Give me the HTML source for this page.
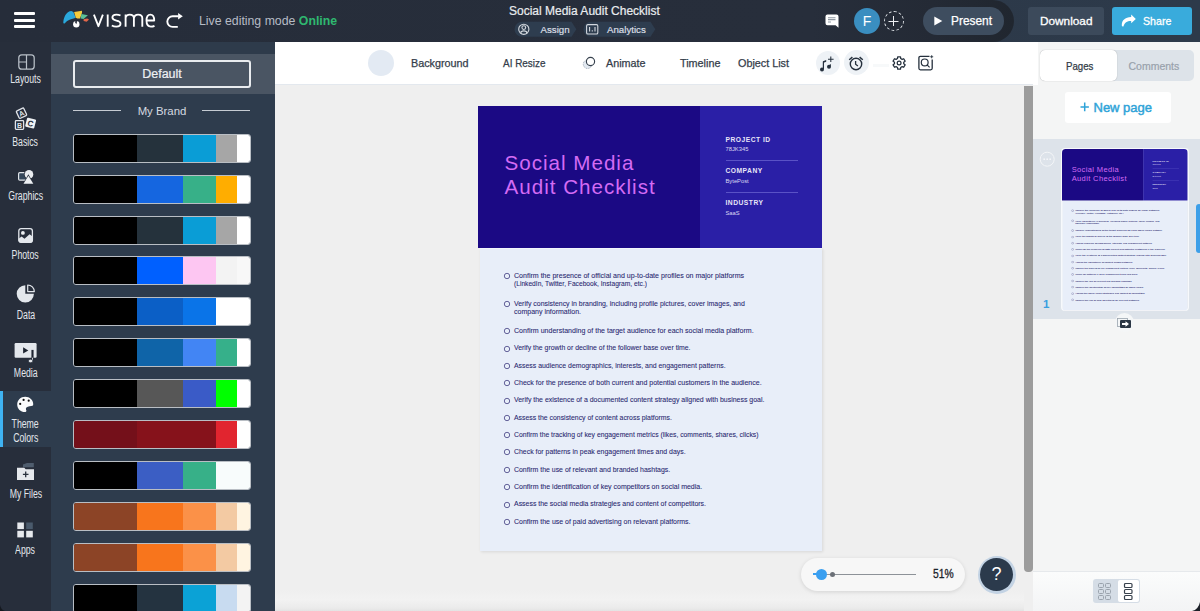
<!DOCTYPE html>
<html><head><meta charset="utf-8">
<style>
*{box-sizing:border-box;margin:0;padding:0}
html,body{width:1200px;height:611px;overflow:hidden;background:#efefef;font-family:"Liberation Sans",sans-serif}
.a{position:absolute}
.t{position:absolute;white-space:nowrap;line-height:1}
#hdr{left:0;top:0;width:1200px;height:42px;background:linear-gradient(90deg,#2a3545 0%,#2d3a4a 100%)}
#side{left:0;top:42px;width:51px;height:569px;background:#272e3b}
#panel{left:51px;top:42px;width:224px;height:569px;background:#2e3c4d}
#tool{left:275px;top:42px;width:758px;height:43px;background:#fff;border-bottom:1px solid #e3e8ee}
#rp{left:1033px;top:42px;width:167px;height:569px;background:#f4f5f5}
.pal{position:absolute;left:73px;width:178px;height:29px;border:1px solid #b9bec4;border-radius:3px;overflow:hidden;display:flex}
.pal i{display:block;height:100%}
.sl{position:absolute;left:0;width:51px;text-align:center;color:#e3e7ec;font-size:12.3px;line-height:1}
.tb{font-size:10.8px;color:#343d4a;-webkit-text-stroke:0.25px #343d4a}
.sl span{display:inline-block;transform:scaleX(.71);transform-origin:center}
.page{position:absolute;width:344px;height:445px}
.pg-body{position:absolute;left:2px;top:142px;width:342px;height:303px;background:#e8eef9;border-top:1px solid #f3f6fb;box-shadow:1px 1px 3px rgba(0,0,0,.10)}
.pg-hd{position:absolute;left:0;top:0;width:222px;height:142px;background:#1b0984}
.pg-rc{position:absolute;left:222px;top:0;width:122px;height:142px;background:#2a1fa6}
.pg-title{font-size:20.6px;color:#d46bf4;letter-spacing:1px}
.pg-lab{font-size:6.7px;font-weight:700;color:#e8e6f7;letter-spacing:0.5px}
.pg-val{font-size:5.8px;color:#dcd9f2}
.pg-ck{position:absolute}
.pg-it{font-size:7px;color:#2a2870;-webkit-text-stroke:0.08px #2a2870;transform-origin:0 0}
</style></head><body>
<!-- header -->
<div id="hdr" class="a">
  <div class="a" style="left:0;top:0;width:1014px;height:42px;background:linear-gradient(90deg,#262d3a 0%,#272e3b 80%,#242a35 92%,#20262f 100%);border-radius:0 21px 21px 0"></div>
  <div class="a" style="left:14px;top:12px;width:21px;height:3px;background:#fff;border-radius:1px"></div>
  <div class="a" style="left:14px;top:19px;width:21px;height:3px;background:#fff;border-radius:1px"></div>
  <div class="a" style="left:14px;top:25px;width:21px;height:3px;background:#fff;border-radius:1px"></div>
  <svg class="a" style="left:60px;top:6px" width="32" height="24" viewBox="0 0 32 24">
    <path d="M3.3 17.3 C3.3 13 5 8.5 7.9 6.3 C9 5.5 10.3 5.1 11.4 5.1 L13.4 5.9 L15.7 11.8 C14.3 12.3 13 12.7 11.8 13 C9.5 13.5 7.4 14.6 6 16 L4.7 17.4Z" fill="#2aa8dc"/>
    <path d="M14.1 5.9 L22 4.7 L22 6.7 L20 12.6 L17.3 12.6 L15.8 11.7Z" fill="#f3cb3c"/>
    <path d="M21.4 8 L27.9 9.2 L23.6 13 L20.6 12.6Z" fill="#5cbf96"/>
    <path d="M23.6 13.3 L27.1 12.6 L29 13.5 L26.7 15.7 L23.6 14.9Z" fill="#e2674a"/>
    <circle cx="16.3" cy="18.3" r="3.2" fill="#fff"/>
    <path d="M16.3 18.3 L14.6 15.6 A3.2 3.2 0 0 1 17.2 15.2Z" fill="#272e3b"/>
  </svg>
  <svg class="a" style="left:90px;top:10px" width="70" height="20" viewBox="90 10 70 20">
    <g fill="none" stroke="#fff" stroke-width="1.85" stroke-linecap="butt" stroke-linejoin="round">
    <path d="M93.9 14.6 L98.4 26.2 L102.9 14.6"/>
    <path d="M107.7 14.5 V26.7"/>
    <path d="M120.5 15.5 C119.4 14.9 118 14.6 116.4 14.6 C113.6 14.6 112.4 15.9 112.4 17.6 C112.4 19.5 114 20.1 116.4 20.6 C119 21.1 120.5 21.8 120.5 23.7 C120.5 25.6 119 26.6 116.3 26.6 C114.5 26.6 113 26.2 111.8 25.5"/>
    <path d="M125.6 26.7 V14.5 M125.6 17.6 C126.2 15.4 127.7 14.6 129.7 14.6 C132.3 14.6 133.9 15.7 133.9 18.3 V26.7 M133.9 18.3 C134.3 15.6 135.9 14.6 138.1 14.6 C140.7 14.6 142.3 15.8 142.3 18.3 V26.7"/>
    <path d="M146.6 20.5 H154.2 C154.2 16.6 152.7 14.6 150.4 14.6 C147.8 14.6 146.5 16.9 146.5 20.6 C146.5 24.5 148.1 26.6 150.9 26.6 C152.4 26.6 153.5 26.3 154.5 25.8"/>
    </g>
  </svg>
  <svg class="a" style="left:162px;top:8px" width="26" height="24" viewBox="0 0 26 24">
    <path d="M16.6 8.3 H10.6 A5.3 5.3 0 0 0 10.6 18.9 H15.8" fill="none" stroke="#fff" stroke-width="1.9"/>
    <path d="M16.1 5 L20.8 8.3 L16.1 11.4Z" fill="#fff"/>
  </svg>
  <div class="t" style="left:199px;top:15.3px;font-size:12.3px;color:#b6bcc5">Live editing mode <b style="color:#2fb870">Online</b></div>

  <div class="t" style="left:509px;top:5.2px;font-size:12px;color:#e9ecef;-webkit-text-stroke:0.2px #e9ecef">Social Media Audit Checklist</div>
  <svg class="a" style="left:514px;top:21px" width="145" height="17" viewBox="514 21 145 17">
    <path d="M522 21.8 H571.5 L576.3 29.3 L571.5 36.8 H522 A7.5 7.5 0 0 1 522 21.8Z" fill="#2e3d4f"/>
    <path d="M591 21.8 H650.5 L655.3 29.3 L650.5 36.8 H591 A7.5 7.5 0 0 1 591 21.8Z" fill="#2e3d4f"/>
    <g fill="none" stroke="#d3d8de" stroke-width="1.1">
    <circle cx="523.8" cy="29.3" r="5.1"/>
    <circle cx="523.8" cy="27.6" r="1.9"/>
    <path d="M521 33.8 V31.8 Q523.8 30 526.6 31.8 V33.8"/>
    <rect x="586.6" y="24.6" width="11.2" height="9.4" rx="1.3"/>
    <path d="M589.6 27 V31.6 M592.3 30.2 V31.6 M595 27 V31.6"/>
    </g>
  </svg>
  <div class="t" style="left:540.5px;top:24.6px;font-size:9.7px;color:#d9dee4;-webkit-text-stroke:0.2px #d9dee4">Assign</div>
  <div class="t" style="left:607px;top:24.6px;font-size:9.7px;color:#d9dee4;-webkit-text-stroke:0.2px #d9dee4">Analytics</div>

  <svg class="a" style="left:825px;top:14px" width="15" height="15" viewBox="0 0 15 15">
    <path d="M2.5 0.5 H11.5 Q13.5 0.5 13.5 2.5 V13.8 L10.6 11.2 H2.5 Q0.5 11.2 0.5 9.2 V2.5 Q0.5 0.5 2.5 0.5Z" fill="#fff"/>
    <path d="M3 3.8 H10.5 M3 5.6 H10.5" stroke="#8e97a1" stroke-width="1.1"/><path d="M3 8 H6" stroke="#8e97a1" stroke-width="1"/>
  </svg>
  <div class="a" style="left:854px;top:8px;width:26px;height:26px;border-radius:50%;background:#3a8ec0"></div>
  <div class="t" style="left:854px;top:14px;width:26px;text-align:center;font-size:14px;color:#fff">F</div>
  <div class="a" style="left:884px;top:11px;width:20px;height:20px;border-radius:50%;border:1.3px dashed #e3e7eb"></div>
  <svg class="a" style="left:884px;top:11px" width="20" height="20" viewBox="0 0 20 20"><path d="M9.5 5 V15 M4.5 10.5 H14.5" stroke="#eef0f3" stroke-width="1"/></svg>

  
  <div class="a" style="left:923px;top:7px;width:81px;height:28px;background:#3e4d5f;border-radius:14px"></div>
  <svg class="a" style="left:934px;top:16px" width="9" height="10" viewBox="0 0 9 10"><path d="M0.3 0.5 L8.3 5 L0.3 9.5Z" fill="#fff"/></svg>
  <div class="t" style="left:951px;top:16.2px;font-size:11.9px;color:#fff;-webkit-text-stroke:0.25px #fff">Present</div>

  <div class="a" style="left:1028px;top:7px;width:76px;height:28px;background:#3c4a5b;border-radius:3px"></div>
  <div class="t" style="left:1040px;top:15.5px;font-size:11.8px;color:#fff;-webkit-text-stroke:0.3px #fff">Download</div>
  <div class="a" style="left:1112px;top:7px;width:80px;height:28px;background:#39abdc;border-radius:3px"></div>
  <svg class="a" style="left:1121px;top:14px" width="16" height="14" viewBox="0 0 16 14">
    <path d="M0.8 11.6 C0.6 6.5 4 3.3 10.2 3.1 V0.6 L14.8 4.9 L10.2 9.3 V6.9 C6.2 6.8 3.6 8.4 2.4 12.6 C1.6 12.7 0.9 12.4 0.8 11.6Z" fill="#fff"/>
  </svg>
  <div class="t" style="left:1142.5px;top:15.5px;font-size:11.8px;color:#fff;-webkit-text-stroke:0.3px #fff;transform:scaleX(.9);transform-origin:0 0">Share</div>
</div>

<!-- left icon sidebar -->
<div id="side" class="a"></div>
<!-- sidebar items -->
<div class="a" style="left:0;top:391px;width:51px;height:56px;background:#2e3c4d"></div>
<div class="a" style="left:0;top:391px;width:3px;height:56px;background:#3fb3f2"></div>
<svg class="a" style="left:18px;top:54px" width="17" height="16" viewBox="0 0 17 16">
  <rect x="0.8" y="0.8" width="15.4" height="14.4" rx="3" fill="none" stroke="#b9c0c8" stroke-width="1.25"/>
  <path d="M8.5 1 V15 M1 8 H8.5" stroke="#b9c0c8" stroke-width="1.2"/>
</svg>
<div class="sl" style="top:73px"><span>Layouts</span></div>
<svg class="a" style="left:10px;top:103px" width="32" height="30" viewBox="0 0 32 30">
  <g transform="rotate(-25 11.5 10.2)"><rect x="7.4" y="6.1" width="8.2" height="8.2" rx="1" fill="none" stroke="#dfe3e8" stroke-width="1.3"/>
  <text x="11.5" y="12.9" font-size="7" font-family="Liberation Sans" font-weight="700" text-anchor="middle" fill="#dfe3e8">A</text></g>
  <rect x="5.4" y="17.7" width="8.2" height="8.6" rx="0.8" fill="none" stroke="#dfe3e8" stroke-width="1.3"/>
  <text x="9.5" y="24.6" font-size="7" font-family="Liberation Sans" font-weight="700" text-anchor="middle" fill="#dfe3e8">B</text>
  <g transform="rotate(14 20.6 20.1)"><rect x="16" y="15.5" width="9.3" height="9.3" rx="1" fill="#eef1f4"/>
  <text x="20.6" y="23.3" font-size="8" font-family="Liberation Sans" font-weight="700" text-anchor="middle" fill="#272e3b">C</text></g>
</svg>
<div class="sl" style="top:136px"><span>Basics</span></div>
<svg class="a" style="left:17px;top:169px" width="19" height="16" viewBox="0 0 19 16">
  <rect x="1.6" y="3.6" width="8" height="7.6" rx="1.2" fill="#34465a" stroke="#dfe3e8" stroke-width="1.2"/>
  <circle cx="12" cy="5.4" r="5" fill="#272e3b"/>
  <circle cx="12" cy="5.4" r="4.3" fill="#e9ecf0"/>
  <path d="M11.4 5.2 L17.3 15.6 H5.5Z" fill="#272e3b"/>
  <path d="M11.4 6.8 L16.3 14.7 H6.5Z" fill="#eef1f4"/>
</svg>
<div class="sl" style="top:190px"><span>Graphics</span></div>
<svg class="a" style="left:17px;top:227px" width="17" height="17" viewBox="0 0 17 17">
  <rect x="1.8" y="1.6" width="13.6" height="13.7" rx="2.3" fill="none" stroke="#e3e7ec" stroke-width="1.3"/>
  <path d="M1.5 11.8 L4.6 9.6 L7.5 11.8 L12.6 7.2 L15.6 9.4 V13.5 Q15.6 15.8 13.5 15.8 H3.8 Q1.5 15.8 1.5 13.5Z" fill="#e3e7ec"/>
  <circle cx="5.9" cy="5.9" r="1.9" fill="#eef1f4"/>
</svg>
<div class="sl" style="top:249px"><span>Photos</span></div>
<svg class="a" style="left:16px;top:283px" width="21" height="21" viewBox="0 0 21 21">
  <path d="M9.3 2.2 A8.6 8.6 0 1 0 17.9 10.8 H9.3Z" fill="#e3e7ec"/>
  <path d="M11.7 8.6 V2 A6.6 6.6 0 0 1 18.3 8.6Z" fill="none" stroke="#e3e7ec" stroke-width="1.2" stroke-linejoin="round"/>
</svg>
<div class="sl" style="top:309px"><span>Data</span></div>
<svg class="a" style="left:14px;top:342px" width="24" height="22" viewBox="0 0 24 22">
  <rect x="0.6" y="1" width="22" height="14.7" rx="1.2" fill="#e3e7ec"/>
  <path d="M9.1 5.2 L14.3 8.4 L9.1 11.6Z" fill="#1d2430"/>
  <path d="M18.5 7.9 V18.3" stroke="#272e3b" stroke-width="2.2"/>
  <path d="M18.5 8.2 V15.7" stroke="#1d2430" stroke-width="0.9"/>
  <path d="M18.5 15.7 V18.5" stroke="#e3e7ec" stroke-width="0.9"/>
  <ellipse cx="16.6" cy="19" rx="2.3" ry="1.7" fill="#e3e7ec" stroke="#272e3b" stroke-width="0.7"/>
</svg>
<div class="sl" style="top:367px"><span>Media</span></div>
<svg class="a" style="left:17px;top:396px" width="17" height="17" viewBox="0 0 17 17">
  <path d="M8.2 0.7 C12.8 0.7 16.2 4 16.2 8 C16.2 8.8 16.1 9.2 16 9.4 C14 10 11 10.4 9.4 11.4 C8.6 12.2 8.8 13.6 9.5 14.8 C9.3 15.7 8.7 16.1 8 16.1 C3.6 16.1 0.2 12.6 0.2 8.4 C0.2 4.2 3.6 0.7 8.2 0.7Z" fill="#fafbfc"/>
  <circle cx="6.6" cy="3.9" r="1.1" fill="#111"/>
  <circle cx="11.7" cy="4.7" r="1.1" fill="#111"/>
  <circle cx="3.2" cy="7.9" r="1.1" fill="#111"/>
</svg>
<div class="sl" style="top:418px"><span>Theme</span></div>
<div class="sl" style="top:432px"><span>Colors</span></div>
<svg class="a" style="left:16px;top:462px" width="20" height="19" viewBox="0 0 20 19">
  <path d="M7 2.5 L11 1 H17.8 V5.2 H7Z" fill="#4f5d6e"/>
  <path d="M1 5.8 H8.3 L9.6 7.3 H18 V18.1 H1Z" fill="#e6e9ed"/>
  <path d="M9.7 9.6 V15.2 M6.9 12.4 H12.5" stroke="#2a323e" stroke-width="1.3"/>
</svg>
<div class="sl" style="top:488px"><span>My Files</span></div>
<svg class="a" style="left:17px;top:522px" width="17" height="16" viewBox="0 0 17 16">
  <rect x="0.3" y="0.5" width="6.6" height="6.6" fill="#e6e9ed"/>
  <rect x="9.2" y="0.5" width="6.6" height="6.6" fill="#4a5a6c"/>
  <rect x="0.3" y="8.8" width="6.6" height="6.6" fill="#e6e9ed"/>
  <rect x="9.2" y="8.8" width="6.6" height="6.6" fill="#e6e9ed"/>
</svg>
<div class="sl" style="top:544px"><span>Apps</span></div>
<div id="panel" class="a"></div>
<div class="a" style="left:51px;top:42px;width:224px;height:12px;background:#2e3b4b"></div>
<div class="a" style="left:51px;top:54px;width:224px;height:40px;background:#4a5563"></div>
<div class="a" style="left:73px;top:60px;width:178px;height:28px;border:2px solid #e9ecef;border-radius:3px"></div>
<div class="t" style="left:73px;top:68px;width:178px;text-align:center;font-size:12.5px;color:#eef0f3;-webkit-text-stroke:0.2px #eef0f3">Default</div>
<div class="a" style="left:73px;top:110px;width:48px;height:1px;background:#c5cbd2"></div>
<div class="a" style="left:202px;top:110px;width:48px;height:1px;background:#c5cbd2"></div>
<div class="t" style="left:73px;top:105.5px;width:178px;text-align:center;font-size:11.4px;color:#d5dae0">My Brand</div>

<div class="pal" style="top:134px"><i style="width:63px;background:#000"></i><i style="width:46px;background:#25323c"></i><i style="width:33px;background:#0a9dd6"></i><i style="width:21px;background:#a6a6a6"></i><i style="width:13px;background:#fff"></i></div>
<div class="pal" style="top:175px"><i style="width:63px;background:#000"></i><i style="width:46px;background:#1566e0"></i><i style="width:33px;background:#37b088"></i><i style="width:21px;background:#ffad00"></i><i style="width:13px;background:#fff"></i></div>
<div class="pal" style="top:216px"><i style="width:63px;background:#000"></i><i style="width:46px;background:#25323c"></i><i style="width:33px;background:#0a9dd6"></i><i style="width:21px;background:#a6a6a6"></i><i style="width:13px;background:#fff"></i></div>
<div class="pal" style="top:256px"><i style="width:63px;background:#000"></i><i style="width:46px;background:#0060ff"></i><i style="width:33px;background:#fdc6f2"></i><i style="width:21px;background:#f3f3f3"></i><i style="width:13px;background:#f8f8f8"></i></div>
<div class="pal" style="top:297px"><i style="width:63px;background:#000"></i><i style="width:46px;background:#0b5fc6"></i><i style="width:33px;background:#0a74e8"></i><i style="width:21px;background:#fff"></i><i style="width:13px;background:#fff"></i></div>
<div class="pal" style="top:338px"><i style="width:63px;background:#000"></i><i style="width:46px;background:#0f64a8"></i><i style="width:33px;background:#4285f4"></i><i style="width:21px;background:#36b08a"></i><i style="width:13px;background:#fff"></i></div>
<div class="pal" style="top:379px"><i style="width:63px;background:#000"></i><i style="width:46px;background:#575757"></i><i style="width:33px;background:#3a5bc7"></i><i style="width:21px;background:#00ff00"></i><i style="width:13px;background:#fff"></i></div>
<div class="pal" style="top:420px"><i style="width:63px;background:#74101a"></i><i style="width:46px;background:#86121b"></i><i style="width:33px;background:#86121b"></i><i style="width:21px;background:#e1252f"></i><i style="width:13px;background:#fff"></i></div>
<div class="pal" style="top:461px"><i style="width:63px;background:#000"></i><i style="width:46px;background:#3b5ec4"></i><i style="width:33px;background:#37b088"></i><i style="width:21px;background:#f8fcfc"></i><i style="width:13px;background:#f8fcfc"></i></div>
<div class="pal" style="top:502px"><i style="width:63px;background:#8c4426"></i><i style="width:46px;background:#f8751c"></i><i style="width:33px;background:#fb9148"></i><i style="width:21px;background:#f3caa3"></i><i style="width:13px;background:#fff4e1"></i></div>
<div class="pal" style="top:543px"><i style="width:63px;background:#8c4426"></i><i style="width:46px;background:#f8751c"></i><i style="width:33px;background:#fb9148"></i><i style="width:21px;background:#f3caa3"></i><i style="width:13px;background:#fff4e1"></i></div>
<div class="pal" style="top:584px"><i style="width:63px;background:#000"></i><i style="width:46px;background:#243340"></i><i style="width:33px;background:#0ba2d6"></i><i style="width:21px;background:#c8dbf0"></i><i style="width:13px;background:#f3f3f3"></i></div>

<div class="page" style="left:478px;top:106px">
<div class="pg-body"></div><div class="pg-hd"></div><div class="pg-rc"></div>
<div class="t pg-title" style="left:26.5px;top:46.6px">Social Media</div>
<div class="t pg-title" style="left:26.5px;top:71.4px">Audit Checklist</div>
<div class="t pg-lab" style="left:247.5px;top:30.5px">PROJECT ID</div>
<div class="t pg-val" style="left:247.5px;top:40.6px">78JK345</div>
<div class="t pg-lab" style="left:247.5px;top:62.4px">COMPANY</div>
<div class="t pg-val" style="left:247.5px;top:72.7px">BytePost</div>
<div class="t pg-lab" style="left:247.5px;top:94.3px">INDUSTRY</div>
<div class="t pg-val" style="left:247.5px;top:104.6px">SaaS</div>
<div class="a" style="left:248px;top:54px;width:72px;height:1px;background:#5a52c6"></div>
<div class="a" style="left:248px;top:86px;width:72px;height:1px;background:#5a52c6"></div>
<svg class="pg-ck" style="left:24.5px;top:166.4px" width="8" height="8" viewBox="0 0 8 8"><circle cx="4" cy="4" r="2.7" fill="none" stroke="#55528e" stroke-width="0.9"/></svg>
<div class="t pg-it" style="left:36px;top:166.1px;transform:scaleX(1.008)">Confirm the presence of official and up-to-date profiles on major platforms</div>
<div class="t pg-it" style="left:36px;top:174.4px;transform:scaleX(0.950)">(LinkedIn, Twitter, Facebook, Instagram, etc.)</div>
<svg class="pg-ck" style="left:24.5px;top:194.4px" width="8" height="8" viewBox="0 0 8 8"><circle cx="4" cy="4" r="2.7" fill="none" stroke="#55528e" stroke-width="0.9"/></svg>
<div class="t pg-it" style="left:36px;top:194.1px;transform:scaleX(0.992)">Verify consistency in branding, including profile pictures, cover images, and</div>
<div class="t pg-it" style="left:36px;top:202.4px;transform:scaleX(1.001)">company information.</div>
<svg class="pg-ck" style="left:24.5px;top:221.0px" width="8" height="8" viewBox="0 0 8 8"><circle cx="4" cy="4" r="2.7" fill="none" stroke="#55528e" stroke-width="0.9"/></svg>
<div class="t pg-it" style="left:36px;top:220.7px;transform:scaleX(1.008)">Confirm understanding of the target audience for each social media platform.</div>
<svg class="pg-ck" style="left:24.5px;top:238.7px" width="8" height="8" viewBox="0 0 8 8"><circle cx="4" cy="4" r="2.7" fill="none" stroke="#55528e" stroke-width="0.9"/></svg>
<div class="t pg-it" style="left:36px;top:238.4px;transform:scaleX(0.982)">Verify the growth or decline of the follower base over time.</div>
<svg class="pg-ck" style="left:24.5px;top:256.3px" width="8" height="8" viewBox="0 0 8 8"><circle cx="4" cy="4" r="2.7" fill="none" stroke="#55528e" stroke-width="0.9"/></svg>
<div class="t pg-it" style="left:36px;top:256.0px;transform:scaleX(0.985)">Assess audience demographics, interests, and engagement patterns.</div>
<svg class="pg-ck" style="left:24.5px;top:273.2px" width="8" height="8" viewBox="0 0 8 8"><circle cx="4" cy="4" r="2.7" fill="none" stroke="#55528e" stroke-width="0.9"/></svg>
<div class="t pg-it" style="left:36px;top:272.9px;transform:scaleX(1.002)">Check for the presence of both current and potential customers in the audience.</div>
<svg class="pg-ck" style="left:24.5px;top:290.7px" width="8" height="8" viewBox="0 0 8 8"><circle cx="4" cy="4" r="2.7" fill="none" stroke="#55528e" stroke-width="0.9"/></svg>
<div class="t pg-it" style="left:36px;top:290.4px;transform:scaleX(0.993)">Verify the existence of a documented content strategy aligned with business goal.</div>
<svg class="pg-ck" style="left:24.5px;top:307.9px" width="8" height="8" viewBox="0 0 8 8"><circle cx="4" cy="4" r="2.7" fill="none" stroke="#55528e" stroke-width="0.9"/></svg>
<div class="t pg-it" style="left:36px;top:307.6px;transform:scaleX(0.983)">Assess the consistency of content across platforms.</div>
<svg class="pg-ck" style="left:24.5px;top:325.4px" width="8" height="8" viewBox="0 0 8 8"><circle cx="4" cy="4" r="2.7" fill="none" stroke="#55528e" stroke-width="0.9"/></svg>
<div class="t pg-it" style="left:36px;top:325.1px;transform:scaleX(0.973)">Confirm the tracking of key engagement metrics (likes, comments, shares, clicks)</div>
<svg class="pg-ck" style="left:24.5px;top:342.3px" width="8" height="8" viewBox="0 0 8 8"><circle cx="4" cy="4" r="2.7" fill="none" stroke="#55528e" stroke-width="0.9"/></svg>
<div class="t pg-it" style="left:36px;top:342.0px;transform:scaleX(0.989)">Check for patterns in peak engagement times and days.</div>
<svg class="pg-ck" style="left:24.5px;top:359.8px" width="8" height="8" viewBox="0 0 8 8"><circle cx="4" cy="4" r="2.7" fill="none" stroke="#55528e" stroke-width="0.9"/></svg>
<div class="t pg-it" style="left:36px;top:359.5px;transform:scaleX(0.991)">Confirm the use of relevant and branded hashtags.</div>
<svg class="pg-ck" style="left:24.5px;top:377.3px" width="8" height="8" viewBox="0 0 8 8"><circle cx="4" cy="4" r="2.7" fill="none" stroke="#55528e" stroke-width="0.9"/></svg>
<div class="t pg-it" style="left:36px;top:377.0px;transform:scaleX(0.999)">Confirm the identification of key competitors on social media.</div>
<svg class="pg-ck" style="left:24.5px;top:394.5px" width="8" height="8" viewBox="0 0 8 8"><circle cx="4" cy="4" r="2.7" fill="none" stroke="#55528e" stroke-width="0.9"/></svg>
<div class="t pg-it" style="left:36px;top:394.2px;transform:scaleX(0.991)">Assess the social media strategies and content of competitors.</div>
<svg class="pg-ck" style="left:24.5px;top:412.0px" width="8" height="8" viewBox="0 0 8 8"><circle cx="4" cy="4" r="2.7" fill="none" stroke="#55528e" stroke-width="0.9"/></svg>
<div class="t pg-it" style="left:36px;top:411.7px;transform:scaleX(0.995)">Confirm the use of paid advertising on relevant platforms.</div>
</div>
<div class="a" style="left:275px;top:590px;width:749px;height:21px;background:linear-gradient(#efefef 0%,#f2f2f2 45%,#ebebeb 85%,#e3e3e3 100%)"></div>
<!-- toolbar -->
<div id="tool" class="a">
</div>

<!-- toolbar content -->
<div class="a" style="left:368px;top:50px;width:26px;height:26px;border-radius:50%;background:#e3eaf3"></div>
<div class="t tb" style="left:411px;top:58px">Background</div>
<div class="t tb" style="left:503px;top:58px;transform:scaleX(.92);transform-origin:0 0">AI Resize</div>
<svg class="a" style="left:581px;top:56px" width="16" height="15" viewBox="0 0 16 15">
  <circle cx="6.6" cy="8.2" r="4.3" fill="#e2e9f1" stroke="#8f99a5" stroke-width="0.8" stroke-dasharray="1 0.8"/>
  <circle cx="9.5" cy="5.5" r="4.1" fill="#fff" stroke="#35404c" stroke-width="1.15"/>
</svg>
<div class="t tb" style="left:606px;top:58px">Animate</div>
<div class="t tb" style="left:680px;top:58px">Timeline</div>
<div class="t tb" style="left:738px;top:58px">Object List</div>
<div class="a" style="left:816px;top:50.5px;width:24px;height:24px;border-radius:50%;background:#eef2f6"></div>
<svg class="a" style="left:818px;top:53px" width="20" height="20" viewBox="0 0 20 20">
  <circle cx="4" cy="16.4" r="2" fill="#25303d"/>
  <path d="M5.4 16 V8.6" stroke="#25303d" stroke-width="1.2"/>
  <path d="M5 8.2 L8.2 6.9 V8.8 L5 10Z" fill="#25303d"/>
  <circle cx="11" cy="13.7" r="2" fill="#25303d"/>
  <path d="M12.3 13.4 V11.2" stroke="#25303d" stroke-width="1"/>
  <path d="M12.8 3.5 V9 M10 6.2 H15.6" stroke="#25303d" stroke-width="1.05"/>
</svg>
<div class="a" style="left:844px;top:50px;width:25px;height:25px;border-radius:50%;background:#eef2f6"></div>
<svg class="a" style="left:847px;top:54px" width="19" height="19" viewBox="0 0 19 19">
  <circle cx="9" cy="10" r="5.7" fill="none" stroke="#25303d" stroke-width="1.4"/>
  <path d="M8.6 7 V10.2 L10.9 12" fill="none" stroke="#25303d" stroke-width="1.3"/>
  <path d="M2.2 5.8 L5.4 3.1 M12.6 3.1 L15.8 5.8" stroke="#25303d" stroke-width="1.4"/>
</svg>
<div class="a" style="left:873px;top:64px;width:16px;height:3px;background:#f7f9fa"></div>
<svg class="a" style="left:892px;top:56px" width="15" height="15" viewBox="0 0 15 15">
  <path d="M5.68 0.86 L8.52 0.86 L8.71 2.58 L10.12 3.40 L11.71 2.70 L13.12 5.16 L11.73 6.18 L11.73 7.82 L13.12 8.84 L11.71 11.30 L10.12 10.60 L8.71 11.42 L8.52 13.14 L5.68 13.14 L5.49 11.42 L4.08 10.60 L2.49 11.30 L1.08 8.84 L2.47 7.82 L2.47 6.18 L1.08 5.16 L2.49 2.70 L4.08 3.40 L5.49 2.58Z" fill="none" stroke="#25303d" stroke-width="1.25" stroke-linejoin="round"/>
  <circle cx="7.1" cy="7" r="1.9" fill="none" stroke="#25303d" stroke-width="1.2"/>
</svg>
<svg class="a" style="left:917px;top:54px" width="17" height="17" viewBox="0 0 17 17">
  <path d="M12.5 2.3 H3.4 Q1.9 2.3 1.9 3.8 V14.3 Q1.9 15.8 3.4 15.8 H13.7 Q15.2 15.8 15.2 14.3 V5.5" fill="none" stroke="#25303d" stroke-width="1.3"/>
  <circle cx="7.7" cy="8.4" r="3.4" fill="none" stroke="#25303d" stroke-width="1.2"/>
  <path d="M10.1 10.8 L12.6 13.3" stroke="#25303d" stroke-width="1.2"/>
  <path d="M14.7 1.2 V4.3 M13.2 2.75 H16.2" stroke="#25303d" stroke-width="0.9"/>
</svg>
<!-- right panel -->
<div id="rp" class="a"></div>

<!-- right panel content -->
<div class="a" style="left:1033px;top:42px;width:5px;height:43px;background:#fff"></div>
<div class="a" style="left:1024px;top:86px;width:9px;height:486px;background:#9c9c9c;border-radius:0 0 4px 4px"></div>
<div class="a" style="left:1040px;top:50px;width:154px;height:31px;background:#dde3e9;border-radius:5px"></div>
<div class="a" style="left:1040px;top:50px;width:77px;height:31px;background:#fff;border-radius:5px;box-shadow:0 0 1px rgba(0,0,0,.35)"></div>
<div class="t" style="left:1065.5px;top:61px;font-size:10.5px;color:#333c48;-webkit-text-stroke:0.25px #333c48;transform:scaleX(.92);transform-origin:0 0">Pages</div>
<div class="t" style="left:1128.5px;top:61px;font-size:10.5px;color:#98a1ab;-webkit-text-stroke:0.2px #98a1ab">Comments</div>
<div class="a" style="left:1065px;top:92px;width:106px;height:31px;background:#fff;border-radius:3px"></div>
<svg class="a" style="left:1080px;top:102px" width="10" height="10" viewBox="0 0 10 10"><path d="M4.7 0.5 V9.3 M0.5 4.9 H8.9" stroke="#2ea3d8" stroke-width="1.5"/></svg>
<div class="t" style="left:1093.5px;top:101.2px;font-size:13px;color:#2ea3d8;-webkit-text-stroke:0.45px #2ea3d8">New page</div>
<div class="a" style="left:1033px;top:139px;width:167px;height:180px;background:#dde3ea"></div>
<svg class="a" style="left:1039px;top:151px" width="17" height="17" viewBox="0 0 17 17">
  <circle cx="8.2" cy="8.2" r="7" fill="none" stroke="#f4f6f8" stroke-width="1"/>
  <circle cx="5.2" cy="8.2" r="0.9" fill="#f4f6f8"/><circle cx="8.2" cy="8.2" r="0.9" fill="#f4f6f8"/><circle cx="11.2" cy="8.2" r="0.9" fill="#f4f6f8"/>
</svg>
<div class="a" style="left:1061px;top:147.5px;width:127.5px;height:163px;background:#f7f9fc;border-radius:4px"></div>
<div class="page" style="left:1062px;top:148.5px;transform:scale(0.3654,0.3625);transform-origin:0 0;border-radius:10px;overflow:hidden">
<div class="pg-body"></div><div class="pg-hd"></div><div class="pg-rc"></div>
<div class="t pg-title" style="left:26.5px;top:46.6px">Social Media</div>
<div class="t pg-title" style="left:26.5px;top:71.4px">Audit Checklist</div>
<div class="t pg-lab" style="left:247.5px;top:30.5px">PROJECT ID</div>
<div class="t pg-val" style="left:247.5px;top:40.6px">78JK345</div>
<div class="t pg-lab" style="left:247.5px;top:62.4px">COMPANY</div>
<div class="t pg-val" style="left:247.5px;top:72.7px">BytePost</div>
<div class="t pg-lab" style="left:247.5px;top:94.3px">INDUSTRY</div>
<div class="t pg-val" style="left:247.5px;top:104.6px">SaaS</div>
<div class="a" style="left:248px;top:54px;width:72px;height:1px;background:#5a52c6"></div>
<div class="a" style="left:248px;top:86px;width:72px;height:1px;background:#5a52c6"></div>
<svg class="pg-ck" style="left:24.5px;top:166.4px" width="8" height="8" viewBox="0 0 8 8"><circle cx="4" cy="4" r="2.7" fill="none" stroke="#55528e" stroke-width="0.9"/></svg>
<div class="t pg-it" style="left:36px;top:166.1px;transform:scaleX(1.008)">Confirm the presence of official and up-to-date profiles on major platforms</div>
<div class="t pg-it" style="left:36px;top:174.4px;transform:scaleX(0.950)">(LinkedIn, Twitter, Facebook, Instagram, etc.)</div>
<svg class="pg-ck" style="left:24.5px;top:194.4px" width="8" height="8" viewBox="0 0 8 8"><circle cx="4" cy="4" r="2.7" fill="none" stroke="#55528e" stroke-width="0.9"/></svg>
<div class="t pg-it" style="left:36px;top:194.1px;transform:scaleX(0.992)">Verify consistency in branding, including profile pictures, cover images, and</div>
<div class="t pg-it" style="left:36px;top:202.4px;transform:scaleX(1.001)">company information.</div>
<svg class="pg-ck" style="left:24.5px;top:221.0px" width="8" height="8" viewBox="0 0 8 8"><circle cx="4" cy="4" r="2.7" fill="none" stroke="#55528e" stroke-width="0.9"/></svg>
<div class="t pg-it" style="left:36px;top:220.7px;transform:scaleX(1.008)">Confirm understanding of the target audience for each social media platform.</div>
<svg class="pg-ck" style="left:24.5px;top:238.7px" width="8" height="8" viewBox="0 0 8 8"><circle cx="4" cy="4" r="2.7" fill="none" stroke="#55528e" stroke-width="0.9"/></svg>
<div class="t pg-it" style="left:36px;top:238.4px;transform:scaleX(0.982)">Verify the growth or decline of the follower base over time.</div>
<svg class="pg-ck" style="left:24.5px;top:256.3px" width="8" height="8" viewBox="0 0 8 8"><circle cx="4" cy="4" r="2.7" fill="none" stroke="#55528e" stroke-width="0.9"/></svg>
<div class="t pg-it" style="left:36px;top:256.0px;transform:scaleX(0.985)">Assess audience demographics, interests, and engagement patterns.</div>
<svg class="pg-ck" style="left:24.5px;top:273.2px" width="8" height="8" viewBox="0 0 8 8"><circle cx="4" cy="4" r="2.7" fill="none" stroke="#55528e" stroke-width="0.9"/></svg>
<div class="t pg-it" style="left:36px;top:272.9px;transform:scaleX(1.002)">Check for the presence of both current and potential customers in the audience.</div>
<svg class="pg-ck" style="left:24.5px;top:290.7px" width="8" height="8" viewBox="0 0 8 8"><circle cx="4" cy="4" r="2.7" fill="none" stroke="#55528e" stroke-width="0.9"/></svg>
<div class="t pg-it" style="left:36px;top:290.4px;transform:scaleX(0.993)">Verify the existence of a documented content strategy aligned with business goal.</div>
<svg class="pg-ck" style="left:24.5px;top:307.9px" width="8" height="8" viewBox="0 0 8 8"><circle cx="4" cy="4" r="2.7" fill="none" stroke="#55528e" stroke-width="0.9"/></svg>
<div class="t pg-it" style="left:36px;top:307.6px;transform:scaleX(0.983)">Assess the consistency of content across platforms.</div>
<svg class="pg-ck" style="left:24.5px;top:325.4px" width="8" height="8" viewBox="0 0 8 8"><circle cx="4" cy="4" r="2.7" fill="none" stroke="#55528e" stroke-width="0.9"/></svg>
<div class="t pg-it" style="left:36px;top:325.1px;transform:scaleX(0.973)">Confirm the tracking of key engagement metrics (likes, comments, shares, clicks)</div>
<svg class="pg-ck" style="left:24.5px;top:342.3px" width="8" height="8" viewBox="0 0 8 8"><circle cx="4" cy="4" r="2.7" fill="none" stroke="#55528e" stroke-width="0.9"/></svg>
<div class="t pg-it" style="left:36px;top:342.0px;transform:scaleX(0.989)">Check for patterns in peak engagement times and days.</div>
<svg class="pg-ck" style="left:24.5px;top:359.8px" width="8" height="8" viewBox="0 0 8 8"><circle cx="4" cy="4" r="2.7" fill="none" stroke="#55528e" stroke-width="0.9"/></svg>
<div class="t pg-it" style="left:36px;top:359.5px;transform:scaleX(0.991)">Confirm the use of relevant and branded hashtags.</div>
<svg class="pg-ck" style="left:24.5px;top:377.3px" width="8" height="8" viewBox="0 0 8 8"><circle cx="4" cy="4" r="2.7" fill="none" stroke="#55528e" stroke-width="0.9"/></svg>
<div class="t pg-it" style="left:36px;top:377.0px;transform:scaleX(0.999)">Confirm the identification of key competitors on social media.</div>
<svg class="pg-ck" style="left:24.5px;top:394.5px" width="8" height="8" viewBox="0 0 8 8"><circle cx="4" cy="4" r="2.7" fill="none" stroke="#55528e" stroke-width="0.9"/></svg>
<div class="t pg-it" style="left:36px;top:394.2px;transform:scaleX(0.991)">Assess the social media strategies and content of competitors.</div>
<svg class="pg-ck" style="left:24.5px;top:412.0px" width="8" height="8" viewBox="0 0 8 8"><circle cx="4" cy="4" r="2.7" fill="none" stroke="#55528e" stroke-width="0.9"/></svg>
<div class="t pg-it" style="left:36px;top:411.7px;transform:scaleX(0.995)">Confirm the use of paid advertising on relevant platforms.</div>
</div>
<div class="t" style="left:1043px;top:298.5px;font-size:11.5px;font-weight:700;color:#3a9fe0">1</div>
<div class="a" style="left:1196px;top:204px;width:6px;height:49px;background:#3d9fe8;border-radius:3px"></div>
<div class="a" style="left:1115px;top:313px;width:19px;height:19px;border-radius:50%;background:#f4f6f7"></div>
<svg class="a" style="left:1117px;top:317px" width="15" height="12" viewBox="0 0 15 12">
  <rect x="0.5" y="1.5" width="10" height="8" fill="none" stroke="#9aa3ad" stroke-width="0.8"/>
  <rect x="3" y="3" width="11" height="8" rx="1" fill="#2a3644"/>
  <path d="M5 6 H8.5 V4.3 L12 7 L8.5 9.7 V8 H5Z" fill="#fff"/>
</svg>
<div class="a" style="left:1033px;top:571px;width:167px;height:40px;background:linear-gradient(#fbfcfc,#f3f4f5);border-top:1px solid #e6e9ec"></div>
<div class="a" style="left:1093px;top:579px;width:47px;height:24px;background:#d5dde6;border-radius:3px"></div>
<div class="a" style="left:1118px;top:580px;width:21px;height:22px;background:#fff;border-radius:2px"></div>
<svg class="a" style="left:1097px;top:582px" width="16" height="19" viewBox="0 0 16 19">
  <g fill="none" stroke="#9aa3ad" stroke-width="1">
  <rect x="1.5" y="1.5" width="5" height="4" rx="1"/><rect x="8.5" y="1.5" width="5" height="4" rx="1"/>
  <rect x="1.5" y="7.5" width="5" height="4" rx="1"/><rect x="8.5" y="7.5" width="5" height="4" rx="1"/>
  <rect x="1.5" y="13.5" width="5" height="4" rx="1"/><rect x="8.5" y="13.5" width="5" height="4" rx="1"/>
  </g>
</svg>
<svg class="a" style="left:1123px;top:582px" width="11" height="19" viewBox="0 0 11 19">
  <g fill="none" stroke="#39424e" stroke-width="1.2">
  <rect x="1.5" y="1.5" width="7.5" height="4" rx="1"/><rect x="1.5" y="7.5" width="7.5" height="4" rx="1"/><rect x="1.5" y="13.5" width="7.5" height="4" rx="1"/>
  </g>
</svg>
<!-- zoom widget -->
<div class="a" style="left:801px;top:558px;width:164px;height:33px;background:#f7f7f7;border-radius:17px;box-shadow:0 1px 4px rgba(0,0,0,.12)"></div>
<div class="a" style="left:813px;top:573.5px;width:103px;height:1.5px;background:#8d9298"></div>
<div class="a" style="left:813px;top:573.2px;width:9px;height:2px;background:#3a9ff0"></div>
<div class="a" style="left:816px;top:569px;width:11px;height:11px;border-radius:50%;background:#3a9ff0"></div>
<div class="a" style="left:829.5px;top:571.8px;width:5px;height:5px;border-radius:50%;background:#6b7077"></div>
<div class="t" style="left:932.5px;top:567.8px;font-size:12px;color:#1d232b;-webkit-text-stroke:0.3px #1d232b;transform:scaleX(.86);transform-origin:0 0">51%</div>
<div class="a" style="left:977.5px;top:555.5px;width:38px;height:38px;border-radius:50%;background:#c3d3e4"></div>
<div class="a" style="left:980px;top:558px;width:33px;height:33px;border-radius:50%;background:#2b3a4c"></div>
<div class="t" style="left:980px;top:565px;width:33px;text-align:center;font-size:18px;color:#fff">?</div>
<svg class="a" style="left:1188px;top:599px" width="12" height="12" viewBox="0 0 12 12"><path d="M12 3 V12 H4 Q10.5 10.5 12 3Z" fill="#1c2028"/></svg>
<svg class="a" style="left:0;top:605px" width="6" height="6" viewBox="0 0 6 6"><path d="M0 0 V6 H5 Q1 5 0 0Z" fill="#15191f"/></svg>
</body></html>
